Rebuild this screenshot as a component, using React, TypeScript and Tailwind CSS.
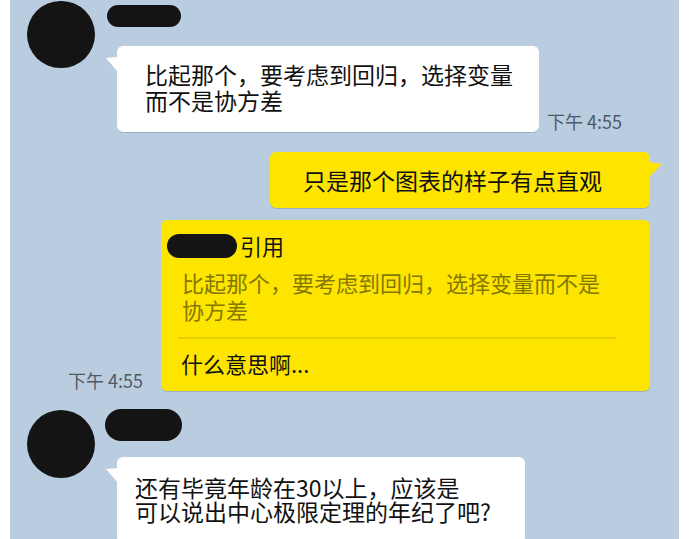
const font = { fontFamily: '"Noto Sans CJK SC", "Noto Sans", sans-serif' }

const Blob = ({ className }: { className: string }) => (
  <div className={`bg-[#141414] rounded-full ${className}`} />
)

const TailLeft = () => (
  <svg width="12" height="16" viewBox="0 0 12 16" className="absolute left-[-11px] top-[11px]">
    <path d="M0 1 L12 0 L12 15 Z" fill="#ffffff" />
  </svg>
)

const TailRight = () => (
  <svg width="13" height="16" viewBox="0 0 13 16" className="absolute right-[-12px] top-[10px]">
    <path d="M0 0 L13 2 L0 15 Z" fill="#fee500" />
  </svg>
)

const Time = ({ className = '' }: { className?: string }) => (
  <span className={`text-[18px] leading-[20px] text-[#4f5966] whitespace-nowrap ${className}`}>下午 4:55</span>
)

export default function App() {
  return (
    <div className="w-[690px] h-[539px] overflow-hidden bg-white pl-[10px] pr-[11px]" style={font}>
      <div className="h-full bg-[#bacde0] flex flex-col text-[#111]">
        {/* incoming 1 */}
        <div className="flex items-start">
          <Blob className="ml-[17px] mt-[1px] w-[68px] h-[67px]" />
          <div className="ml-[12px] flex flex-col">
            <Blob className="mt-[5px] w-[74px] h-[22px]" />
            <div className="mt-[19px] ml-[10px] flex items-end gap-[8px]">
              <div className="relative w-[422px] bg-white rounded-[6px] pl-[28px] pt-[15px] pb-[19px] text-[23px] leading-[26px] shadow-[0_1px_0_rgba(60,90,120,0.25)]">
                <TailLeft />
                比起那个，要考虑到回归，选择变量
                <br />
                而不是协方差
              </div>
              <Time className="mb-[1px]" />
            </div>
          </div>
        </div>

        {/* outgoing 1 */}
        <div className="mt-[20px] flex justify-end pr-[29px]">
          <div className="relative w-[380px] h-[56px] bg-[#fee500] rounded-[6px] pl-[33px] flex items-center text-[23px] shadow-[0_1px_0_rgba(60,90,120,0.25)]">
            <TailRight />
            只是那个图表的样子有点直观
          </div>
        </div>

        {/* outgoing reply */}
        <div className="mt-[12px] flex justify-end items-end pr-[29px] gap-[18px]">
          <Time className="mb-[1px]" />
          <div className="w-[489px] bg-[#fee500] rounded-[6px] pt-[13px] pb-[14px] flex flex-col shadow-[0_1px_0_rgba(60,90,120,0.25)]">
            <div className="flex items-center pl-[6px] h-[25px]">
              <Blob className="w-[70px] h-[24px]" />
              <span className="ml-[3px] text-[22px] leading-[25px]">引用</span>
            </div>
            <div className="mt-[11px] pl-[21px] text-[22px] leading-[27px] text-[#857800]">
              比起那个，要考虑到回归，选择变量而不是
              <br />
              协方差
            </div>
            <div className="mt-[14px] ml-[17px] w-[438px] h-[2px] bg-[#e6cf00]" />
            <div className="mt-[11px] pl-[20px] text-[22px] leading-[27px]">什么意思啊...</div>
          </div>
        </div>

        {/* incoming 2 */}
        <div className="mt-[18px] flex items-start">
          <Blob className="ml-[17px] mt-[1px] w-[68px] h-[68px]" />
          <div className="ml-[10px] flex flex-col">
            <Blob className="w-[77px] h-[32px]" />
            <div className="mt-[16px] ml-[12px]">
              <div className="relative w-[408px] bg-white rounded-[6px] pl-[18px] pt-[18px] pb-[20px] text-[23px] leading-[24px]">
                <TailLeft />
                还有毕竟年龄在30以上，应该是
                <br />
                可以说出中心极限定理的年纪了吧?
              </div>
            </div>
          </div>
        </div>
      </div>
    </div>
  )
}
